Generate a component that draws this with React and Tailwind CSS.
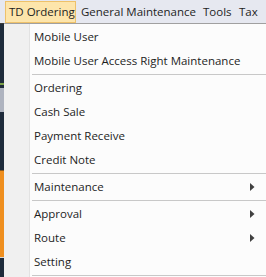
import React from "react";

const rows = [
  { label: "Mobile User" },
  { label: "Mobile User Access Right Maintenance" },
  { sep: true },
  { label: "Ordering" },
  { label: "Cash Sale" },
  { label: "Payment Receive" },
  { label: "Credit Note" },
  { sep: true },
  { label: "Maintenance", sub: true },
  { sep: true },
  { label: "Approval", sub: true },
  { label: "Route", sub: true },
  { label: "Setting" },
  { sep: true },
];

const Arrow = () => (
  <svg width="5" height="8" viewBox="0 0 5 8" className="mr-[11px]">
    <path d="M0 0 L4.5 4 L0 8 Z" fill="#404040" />
  </svg>
);

const App = () => {
  return (
    <div className="w-[266px] h-[277px] overflow-hidden bg-[#fcfcfc] font-['Open_Sans',sans-serif] text-[11.5px] text-[#1e1e1e] whitespace-nowrap">
      {/* menu bar */}
      <div className="flex h-[23px] items-start bg-[#e6e8f0] pl-[5px] pt-px">
        <div className="h-[22px] w-[71px] border border-[#eec16a] bg-[#fde5ab] pl-[3px] leading-[20px]">
          TD Ordering
        </div>
        <div className="h-[22px] w-[122px] pl-[5px] leading-[22px]">
          General Maintenance
        </div>
        <div className="h-[22px] w-[36px] pl-[5px] leading-[22px]">Tools</div>
        <div className="h-[22px] w-[27px] pl-[5px] leading-[22px]">Tax</div>
      </div>

      <div className="flex h-[254px]">
        {/* background window strip */}
        <div className="flex w-[4px] flex-col">
          <div className="h-px bg-[#3a3a3a]" />
          <div className="h-[59px] bg-[#1e2b3b]" />
          <div className="h-[2px] bg-[#7ca04a]" />
          <div className="h-[3px] bg-[#1e2b3b]" />
          <div className="h-[24px] bg-[#aeb3bf]" />
          <div className="h-[58px] bg-[#1e2b3b]" />
          <div className="h-px bg-[#8a5a20]" />
          <div className="h-[86px] bg-[#ef8f1f]" />
          <div className="h-px bg-[#d8d8d8]" />
          <div className="flex-1 bg-[#1e2b3b]" />
        </div>

        {/* dropdown */}
        <div className="flex flex-1 border-t border-[#a0a0a0]">
          <div className="w-[26px] border-r border-[#e2e2e2] bg-[#f0f0f0]" />
          <div className="flex flex-1 flex-col pt-px">
            {rows.map((r, i) =>
              r.sep ? (
                <div key={i} className="ml-[2px] py-px">
                  <div className="h-px bg-[#c8c8c8]" />
                </div>
              ) : (
                <div
                  key={i}
                  className="flex h-[24px] items-center justify-between pl-[4px]"
                >
                  <span>{r.label}</span>
                  {r.sub && <Arrow />}
                </div>
              )
            )}
          </div>
        </div>
      </div>
    </div>
  );
};

export default App;
